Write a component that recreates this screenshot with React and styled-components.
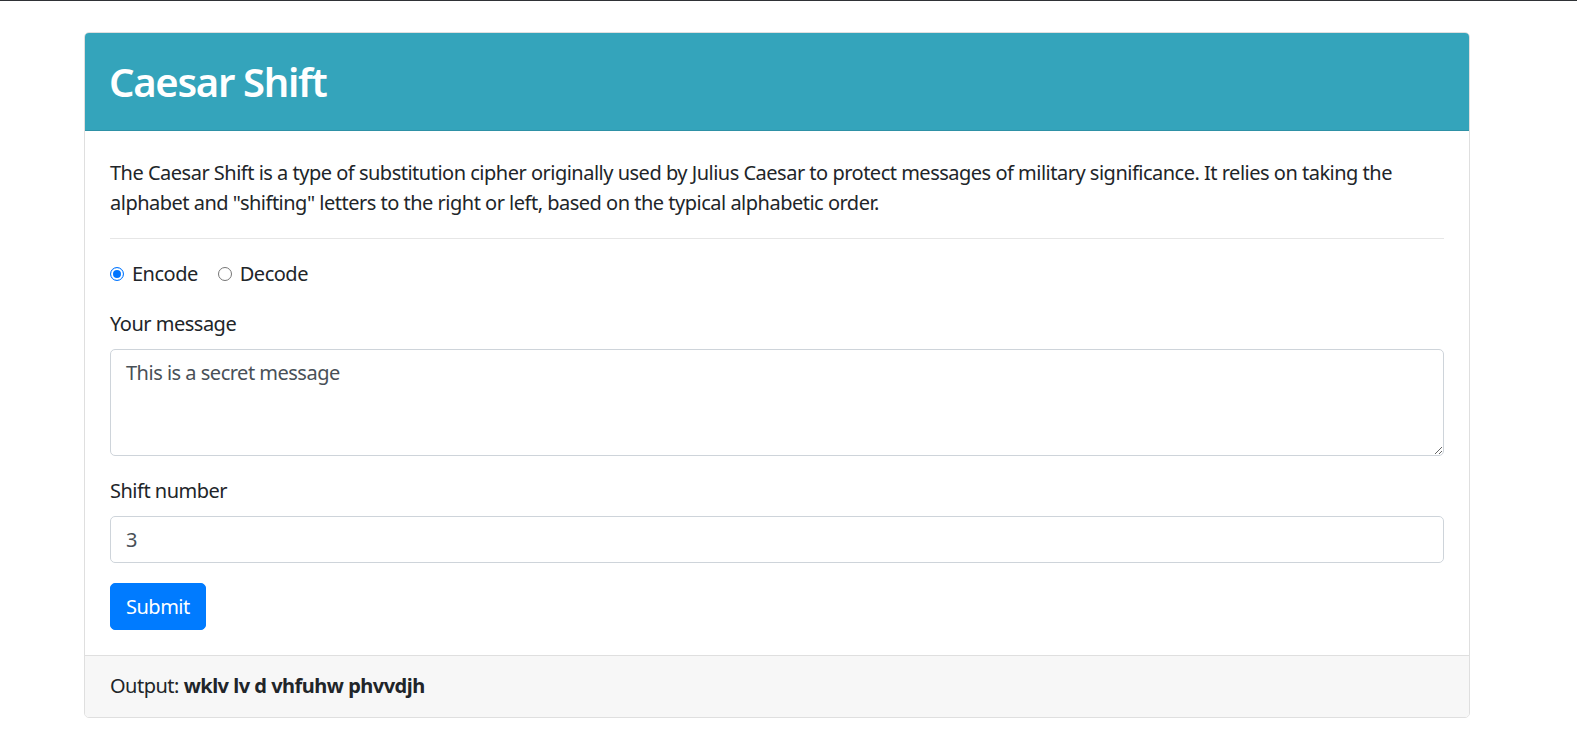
import styled, { createGlobalStyle } from 'styled-components';

const GlobalStyle = createGlobalStyle`
  * { box-sizing: border-box; }
  body {
    margin: 0;
    border-top: 1px solid #2f3236;
    font-family: "Noto Sans", "Open Sans", sans-serif;
    font-size: 20px;
    line-height: 30px;
    letter-spacing: -0.5px;
    color: #212529;
    background: #fff;
  }
`

const Page = styled.div`
  padding: 31px 0 40px 84px;
`

const Card = styled.div`
  width: 1386px;
  border: 1px solid #dfdfdf;
  border-radius: 5px;
  overflow: hidden;
`

const Header = styled.div`
  background: #34a4bb;
  border-bottom: 1px solid #2e91a6;
  padding: 26px 25px 24px;
  margin: -1px -1px 0;
`

const Title = styled.h2`
  margin: 0;
  font-size: 40px;
  line-height: 48px;
  font-weight: 600;
  letter-spacing: -1.3px;
  color: #fff;
`

const Body = styled.div`
  padding: 27px 25px 25px;
`

const Intro = styled.p`
  margin: 0 0 20px;
`

const Rule = styled.hr`
  margin: 0 0 20px;
  border: 0;
  border-top: 1px solid #e6e6e6;
`

const RadioRow = styled.div`
  display: flex;
  align-items: center;
  gap: 20px;
  margin-bottom: 20px;
`

const RadioLabel = styled.label`
  display: flex;
  align-items: center;
  gap: 8px;
`

const Radio = styled.input`
  appearance: none;
  margin: 0;
  width: 14px;
  height: 14px;
  border-radius: 50%;
  border: 1px solid #767676;
  background: #fff;
  &:checked {
    border: 1.5px solid #0075ff;
    box-shadow: inset 0 0 0 2px #fff, inset 0 0 0 7px #0075ff;
  }
`

const Group = styled.div`
  margin-bottom: 20px;
`

const Label = styled.label`
  display: block;
  margin-bottom: 10px;
`

const fieldStyle = `
  display: block;
  width: 100%;
  font: inherit;
  letter-spacing: inherit;
  color: #495057;
  border: 1px solid #ced4da;
  border-radius: 5px;
  padding: 7.5px 15px;
  background: #fff;
`

const TextArea = styled.textarea`
  ${fieldStyle}
  height: 107px;
  resize: vertical;
`

const Input = styled.input`
  ${fieldStyle}
  height: 47px;
`

const Button = styled.button`
  font: inherit;
  letter-spacing: inherit;
  color: #fff;
  background: #007bff;
  border: 1px solid #007bff;
  border-radius: 5px;
  padding: 7.5px 15px;
  height: 47px;
`

const Footer = styled.div`
  background: #f7f7f7;
  border-top: 1px solid #dfdfdf;
  padding: 15px 25px 16px;
`

export default function App() {
  return (
    <>
      <GlobalStyle />
      <Page>
        <Card>
          <Header>
            <Title>Caesar Shift</Title>
          </Header>
          <Body>
            <Intro>
              The Caesar Shift is a type of substitution cipher originally used by Julius Caesar to protect messages
              of military significance. It relies on taking the alphabet and "shifting" letters to the right or left,
              based on the typical alphabetic order.
            </Intro>
            <Rule />
            <RadioRow>
              <RadioLabel>
                <Radio type="radio" name="mode" defaultChecked /> Encode
              </RadioLabel>
              <RadioLabel>
                <Radio type="radio" name="mode" /> Decode
              </RadioLabel>
            </RadioRow>
            <Group>
              <Label>Your message</Label>
              <TextArea defaultValue="This is a secret message" />
            </Group>
            <Group>
              <Label>Shift number</Label>
              <Input type="text" defaultValue="3" />
            </Group>
            <Button>Submit</Button>
          </Body>
          <Footer>
            Output: <b>wklv lv d vhfuhw phvvdjh</b>
          </Footer>
        </Card>
      </Page>
    </>
  )
}
